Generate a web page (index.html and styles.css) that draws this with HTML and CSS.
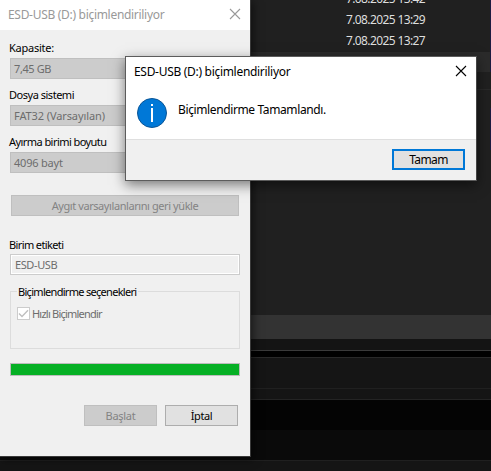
FILE: index.html
```
<!DOCTYPE html>
<html lang="tr">
<head>
<meta charset="utf-8">
<title>ESD-USB (D:) biçimlendiriliyor</title>
<link rel="stylesheet" href="styles.css">
</head>
<body>
<main class="desktop">
  <section class="explorer">
    <div class="files">
      <div class="file">7.08.2025 13:42</div>
      <div class="file">7.08.2025 13:29</div>
      <div class="file">7.08.2025 13:27</div>
      <div class="file selected"></div>
      <div class="group-gap"></div>
      <div class="file link"></div>
      <div class="file link"></div>
    </div>
    <div class="status"></div>
    <div class="frame-bottom"></div>
  </section>
  <section class="back-window">
    <div class="gap"></div>
    <div class="panel"></div>
    <div class="strip"></div>
    <div class="well"></div>
    <div class="well low"></div>
    <div class="bar"></div>
  </section>

  <section class="window format">
    <header class="title"><span class="t-title">ESD-USB (D:) biçimlendiriliyor</span>
      <svg class="close" viewBox="0 0 10 10"><path d="M0 0L10 10M10 0L0 10"/></svg>
    </header>
    <div class="form">
      <label><span class="t-cap">Kapasite:</span></label>
      <div class="combo"><span class="t-gb">7,45 GB</span></div>
      <label><span class="t-fs">Dosya sistemi</span></label>
      <div class="combo"><span class="t-fat">FAT32 (Varsayılan)</span></div>
      <label><span class="t-unit">Ayırma birimi boyutu</span></label>
      <div class="combo"><span class="t-bytes">4096 bayt</span></div>
      <div class="button disabled defaults"><span class="t-def">Aygıt varsayılanlarını geri yükle</span></div>
      <label class="volume"><span class="t-vol">Birim etiketi</span></label>
      <div class="input"><span class="t-esd">ESD-USB</span></div>
      <fieldset>
        <legend><span class="t-opt">Biçimlendirme seçenekleri</span></legend>
        <div class="check">
          <svg viewBox="0 0 13 13"><rect x=".5" y=".5" width="12" height="12"/><path d="M2 6.4L5 9.4L11 3.2"/></svg>
          <span class="t-quick">Hızlı Biçimlendir</span>
        </div>
      </fieldset>
      <div class="progress"></div>
      <div class="actions">
        <div class="button disabled"><span class="t-start">Başlat</span></div>
        <div class="button"><span class="t-cancel">İptal</span></div>
      </div>
    </div>
  </section>

  <section class="window message">
    <header class="title"><span class="t-title">ESD-USB (D:) biçimlendiriliyor</span>
      <svg class="close" viewBox="0 0 10 10"><path d="M0 0L10 10M10 0L0 10"/></svg>
    </header>
    <div class="body">
      <svg class="info" viewBox="0 0 30 30"><circle cx="15" cy="15" r="14.5"/><path d="M14 6h2v2h-2zM14 10h2v14h-2z"/></svg>
      <span class="t-msg">Biçimlendirme Tamamlandı.</span>
    </div>
    <footer><div class="button primary"><span class="t-ok">Tamam</span></div></footer>
  </section>
</main>
</body>
</html>
```

FILE: styles.css
```
* { box-sizing: border-box; }
body { margin: 0; background: #202020; }
.desktop {
  position: relative;
  width: 491px;
  height: 471px;
  overflow: hidden;
  font: 12px/15px "Noto Sans", "Open Sans", sans-serif;
  color: #000;
}
span { white-space: nowrap; }

/* File list behind the dialogs */
.explorer { height: 351px; background: #202020; display: flex; flex-direction: column; }
.files { height: 315px; overflow: hidden; }
.file {
  height: 21px;
  padding-left: 346px;
  line-height: 20px;
  color: #dedede;
  letter-spacing: -.62px;
  border-right: 1px solid #1d1b40;
}
.file:first-child { margin-top: -11px; }
.file.selected { background: #2b2b2b; height: 20px; }
.group-gap { height: 36px; background: linear-gradient(#202020 17px, #292929 17px, #292929 18px, #202020 18px); }
.status { height: 24px; background: #333; }
.frame-bottom { height: 12px; background: #141414; border-bottom: 1px solid #3a3a3a; }

.back-window { height: 120px; background: #151515; }
.gap { height: 7px; background: #000; border-bottom: 1px solid #292929; }
.panel { height: 31px; border-bottom: 1px solid #202020; }
.strip { height: 11px; border-bottom: 1px solid #242424; }
.well { height: 30px; background: #040404; }
.well.low { height: 31px; background: #0a0a0a; border-bottom: 1px solid #202020; }
.bar { height: 10px; }

.window { position: absolute; display: flex; flex-direction: column; }
.title { display: flex; justify-content: space-between; align-items: center; background: #fff; height: 30px; }
.close { width: 10px; height: 10px; overflow: visible; fill: none; stroke: currentColor; stroke-width: 1.1; }

.format { left: 0; top: 0; width: 251px; height: 457px; background: #f0f0f0; border: solid #3a3a3a; border-width: 0 1px 1px 0; box-shadow: 2px 2px 9px rgba(0,0,0,.55); }
.format .title { padding: 0 10px 2px 8px; color: #999; }
.form {
  display: flex;
  flex-direction: column;
  padding: 10px 10px 0;
  font-size: 11px;
}
label { height: 18px; line-height: 15px; margin-left: -1px; }
.combo, .button, .input { display: flex; align-items: center; height: 21px; flex: none; }
.combo { background: #ccc; border: 1px solid #bfbfbf; padding-left: 3px; color: #6d6d6d; margin-bottom: 8px; }
.button { justify-content: center; width: 73px; background: #e1e1e1; border: 1px solid #adadad; }
.button.disabled { background: #ccc; border-color: #bfbfbf; color: #838383; }
.button.defaults { width: 228px; margin: 14px 1px 21px; }
.input { border: 1px solid #ccc; box-shadow: inset 0 0 0 1px #fff; padding-left: 4px; color: #6d6d6d; }
.form .volume { height: 17px; }
fieldset { margin: 9px 0 0; padding: 0 6px; border: 1px solid #dcdcdc; height: 65px; }
legend { padding: 0 2px 0 1px; height: 15px; line-height: 15px; }
.check { display: flex; align-items: center; gap: 2px; height: 13px; margin-top: 8px; color: #6d6d6d; }
.check svg { width: 13px; height: 13px; fill: #fff; stroke: #ccc; }
.check path { fill: none; stroke: #bfbfbf; stroke-width: 1.4; }
.progress { height: 13px; margin-top: 14px; background: #06b025; border: 1px solid #bcbcbc; }
.actions { display: flex; justify-content: flex-end; gap: 8px; padding-right: 2px; margin-top: 29px; }

.message { left: 125px; top: 56px; width: 352px; height: 125px; background: #fff; border: 1px solid #5c5c5c; border-right-color: #444; box-shadow: 0 4px 12px rgba(0,0,0,.5); }
.message .title { padding: 0 10px 2px 8px; }
.body { display: flex; height: 52px; padding: 11px 0 0 11px; gap: 11px; }
.info { width: 30px; height: 30px; }
.info circle { fill: #0078d7; stroke: #0b5596; }
.info path { fill: #fff; }
.body span { margin-top: 4px; }
footer { display: flex; justify-content: flex-end; flex: 1; background: #f0f0f0; border-top: 1px solid #dfdfdf; padding: 9px 11px 0; }
.button.primary { border: 2px solid #0078d7; }

/* Tracking per string */
.t-title { letter-spacing: -.3px; }
.t-msg { letter-spacing: -.38px; }
.t-ok { letter-spacing: -.6px; }
.t-cap { letter-spacing: -.25px; }
.t-gb { letter-spacing: -.4px; }
.t-fs { letter-spacing: -.48px; }
.t-fat { letter-spacing: -.1px; }
.t-unit { letter-spacing: -.56px; }
.t-bytes { letter-spacing: -.2px; }
.t-def { letter-spacing: -.42px; }
.t-vol { letter-spacing: -.62px; }
.t-esd { letter-spacing: -.4px; }
.t-opt { letter-spacing: -.7px; }
.t-quick { letter-spacing: -.78px; }
.t-start { letter-spacing: -.27px; }
.t-cancel { letter-spacing: -.35px; }
```
